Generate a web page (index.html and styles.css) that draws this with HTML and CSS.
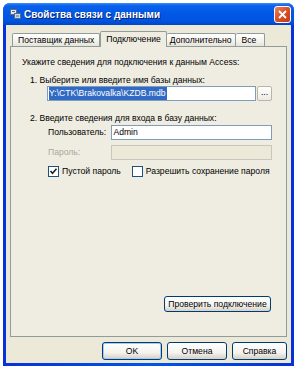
FILE: index.html
```html
<!DOCTYPE html>
<html lang="ru">
<head>
  <meta charset="UTF-8" />
  <title>Свойства связи с данными</title>
  <link rel="stylesheet" href="styles.css">
</head>
<body>

<div class="window">
  <div class="titlebar">
    <svg class="title-icon" width="11" height="10" viewBox="0 0 11 10">
      <rect x="0.5" y="0.5" width="6" height="5" fill="#e8e8e8" stroke="#5a6c84"/>
      <rect x="4.5" y="4.5" width="6" height="5" fill="#d0d8e8" stroke="#5a6c84"/>
      <line x1="2" y1="2.5" x2="5" y2="2.5" stroke="#5a6c84"/>
      <line x1="6" y1="7" x2="9" y2="7" stroke="#5a6c84"/>
    </svg>
    <span class="title">Свойства связи с данными</span>
    <span class="close-btn">
      <svg width="9" height="9" viewBox="0 0 9 9">
        <path d="M1 1 L8 8 M8 1 L1 8" stroke="#fff" stroke-width="1.8"/>
      </svg>
    </span>
  </div>

  <div class="client">
    <!-- вкладки -->
    <div class="tabs">
      <div class="tab tab-first">Поставщик данных</div>
      <div class="tab active">Подключение</div>
      <div class="tab tab-extra">Дополнительно</div>
      <div class="tab tab-all">Все</div>
    </div>

    <div class="panel">
      <div class="intro">Укажите сведения для подключения к данным Access:</div>
      <div class="step">1. Выберите или введите имя базы данных:</div>
      <div class="file-row">
        <div class="input file-input"><span class="selected">Y:\CTK\Brakovalka\KZDB.mdb</span></div>
        <div class="browse-btn">...</div>
      </div>
      <div class="step step-two">2. Введите сведения для входа в базу данных:</div>
      <div class="field">
        <span class="field-label">Пользователь:</span>
        <div class="input">Admin</div>
      </div>
      <div class="field field-disabled">
        <span class="field-label">Пароль:</span>
        <div class="input"></div>
      </div>
      <div class="checks">
        <span class="check">
          <svg class="box" width="11" height="11" viewBox="0 0 11 11">
            <rect x="0.5" y="0.5" width="10" height="10" fill="#fff" stroke="#1c5180"/>
            <path d="M2.5 5 L4.5 7.2 L8.5 2.8" fill="none" stroke="#1e1e1e" stroke-width="1.6"/>
          </svg>
          Пустой пароль
        </span>
        <span class="check check-second">
          <svg class="box" width="11" height="11" viewBox="0 0 11 11">
            <rect x="0.5" y="0.5" width="10" height="10" fill="#fff" stroke="#1c5180"/>
          </svg>
          Разрешить сохранение пароля
        </span>
      </div>
      <div class="test-row">
        <div class="btn btn-test">Проверить подключение</div>
      </div>
    </div>

    <div class="buttons">
      <div class="btn btn-default">OK</div>
      <div class="btn">Отмена</div>
      <div class="btn btn-help">Справка</div>
    </div>
  </div>
</div>

</body>
</html>
```

FILE: styles.css
```css
body {
  margin: 0;
  width: 296px;
  height: 369px;
  overflow: hidden;
  background-color: #fff;
  font-family: "Liberation Sans", Arial, sans-serif;
  font-size: 8.6px;
  color: #000;
}

.window {
  margin: 3px 2px 0 3px;
  height: 363px;
  display: flex;
  flex-direction: column;
  background: linear-gradient(to right, #0831d9, #0055ea 50%, #0831d9);
  border-radius: 7px 7px 0 0;
}

.titlebar {
  height: 22px;
  display: flex;
  align-items: center;
  padding: 0 3px 0 7px;
  border-radius: 7px 7px 0 0;
  background: linear-gradient(#3d8dfd 0%, #0a62ec 12%, #0058e6 45%, #0054e0 80%, #0046c8 100%);
  color: #fff;
}

.title-icon {
  margin-right: 3px;
}

.title {
  font-size: 10px;
  font-weight: bold;
  text-shadow: 1px 1px 0 #0a1e6a;
}

.close-btn {
  margin-left: auto;
  width: 15px;
  height: 15px;
  border: 1px solid #fff;
  border-radius: 3px;
  background: linear-gradient(135deg, #ef8060, #dc4e25 50%, #c23a14);
  display: flex;
  align-items: center;
  justify-content: center;
}

.client {
  flex: 1;
  margin: 0 3px 3px;
  padding: 6px 4px 0;
  background-color: #ece9d8;
  display: flex;
  flex-direction: column;
}

.tabs {
  display: flex;
  align-items: flex-end;
  margin-left: 2px;
  height: 15px;
  position: relative;
  z-index: 1;
}

.tab {
  height: 12px;
  line-height: 12px;
  padding: 0 5px;
  border: 1px solid #919b9c;
  border-bottom: none;
  border-left: none;
  border-radius: 2px 2px 0 0;
  background: linear-gradient(#ffffff, #f3f2ec 60%, #e6e4d8);
  white-space: nowrap;
}

.tab-first {
  border-left: 1px solid #919b9c;
}

.tab-extra {
  padding: 0 3px;
}

.tab-all {
  padding: 0 8px 0 6px;
}

.tab.active {
  height: 15px;
  line-height: 14px;
  margin-bottom: -1px;
  padding: 0 5px;
  border-left: 1px solid #919b9c;
  background: #efede2;
}

.panel {
  flex: 1;
  border: 1px solid #919b9c;
  background-color: #efede2;
  padding: 10px 14px 24px 11px;
  display: flex;
  flex-direction: column;
  line-height: 11px;
  white-space: nowrap;
}

.step {
  margin-top: 7px;
  margin-left: 8px;
}

.step-two {
  margin-top: 12px;
}

.file-row {
  display: flex;
  margin-left: 25px;
}

.input {
  height: 13px;
  line-height: 13px;
  border: 1px solid #7f9db9;
  background-color: #fff;
  padding: 0 1px;
}

.file-input {
  flex: 1;
}

.selected {
  display: inline-block;
  background-color: #316ac5;
  color: #fff;
  padding-right: 1px;
}

.browse-btn {
  width: 13px;
  height: 13px;
  margin-left: 1px;
  border: 1px solid #b8b6a8;
  border-radius: 2px;
  background: linear-gradient(#ffffff, #ebeae2);
  text-align: center;
  line-height: 10px;
}

.field {
  display: flex;
  align-items: center;
  margin-left: 26px;
  margin-top: 1px;
}

.field + .field {
  margin-top: 5px;
}

.field-label {
  width: 64px;
}

.field .input {
  width: 158px;
}

.field-disabled .field-label {
  color: #aca899;
}

.field-disabled .input {
  border-color: #c9c7ba;
  background-color: #ece9d8;
}

.checks {
  display: flex;
  align-items: center;
  margin-top: 6px;
  margin-left: 26px;
}

.check {
  display: flex;
  align-items: center;
}

.check .box {
  margin-right: 3px;
}

.check-second {
  margin-left: 11px;
}

.test-row {
  margin-top: auto;
  display: flex;
  justify-content: flex-end;
  padding-right: 1px;
}

.btn {
  height: 16px;
  line-height: 16px;
  width: 58px;
  text-align: center;
  border: 1px solid #003c74;
  border-radius: 3px;
  background: linear-gradient(#ffffff, #f4f3ee 60%, #d6d0c5);
}

.btn-test {
  width: 105px;
  height: 14px;
  line-height: 14px;
}

.buttons {
  display: flex;
  justify-content: flex-end;
  gap: 5px;
  padding: 5px 0 3px;
}

.btn-default {
  box-shadow: inset 0 0 0 1px #a6caf0;
}

.btn-help {
  width: 53px;
}
```
